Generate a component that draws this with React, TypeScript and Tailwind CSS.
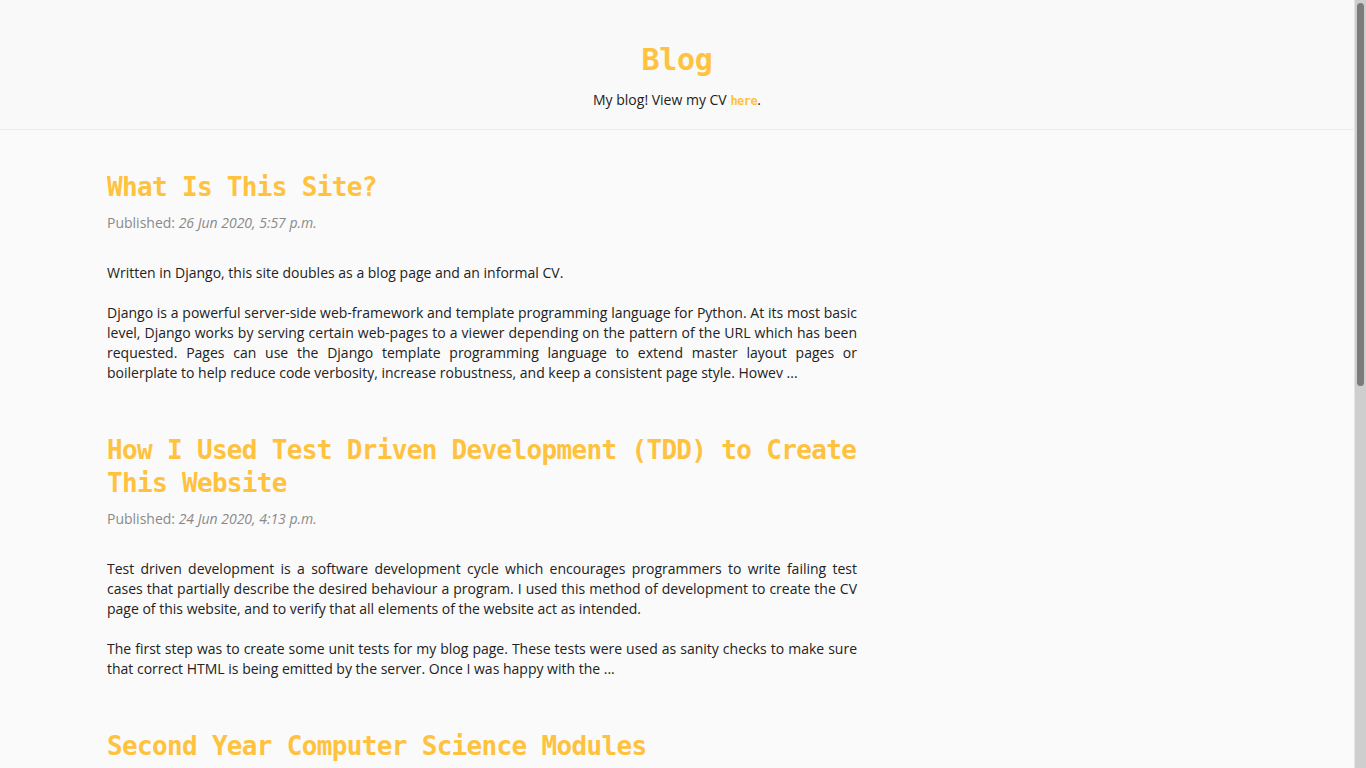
const posts = [
  {
    title: 'What Is This Site?',
    date: '26 Jun 2020, 5:57 p.m.',
    paragraphs: [
      'Written in Django, this site doubles as a blog page and an informal CV.',
      'Django is a powerful server-side web-framework and template programming language for Python. At its most basic level, Django works by serving certain web-pages to a viewer depending on the pattern of the URL which has been requested. Pages can use the Django template programming language to extend master layout pages or boilerplate to help reduce code verbosity, increase robustness, and keep a consistent page style. Howev ...',
    ],
  },
  {
    title: 'How I Used Test Driven Development (TDD) to Create This Website',
    date: '24 Jun 2020, 4:13 p.m.',
    paragraphs: [
      'Test driven development is a software development cycle which encourages programmers to write failing test cases that partially describe the desired behaviour a program. I used this method of development to create the CV page of this website, and to verify that all elements of the website act as intended.',
      'The first step was to create some unit tests for my blog page. These tests were used as sanity checks to make sure that correct HTML is being emitted by the server. Once I was happy with the ...',
    ],
  },
  {
    title: 'Second Year Computer Science Modules',
    date: '20 Jun 2020, 2:31 p.m.',
    paragraphs: [
      'My second year of studying Computer Science has now come to an end, so I thought it would be a good idea to write a short summary of each of the modules I took this year, and what I thought of them.',
      'The year was split into two terms, each containing a mix of compulsory and optional modules. Topics ranged from software engineering and databases through to algorithms, networks and the theory of computation, with a group project running throughout the year that tied many of these ideas together ...',
    ],
  },
]

export default function App() {
  return (
    <div className="flex h-screen overflow-hidden bg-[#fafafa] font-['Open_Sans',sans-serif] text-[14px] text-[#222]">
      <div className="flex-1 overflow-hidden">
        <header className="h-[130px] border-b border-[#ececec] bg-[#f9f9f9] pt-[40px] text-center">
          <h1 className="font-['DejaVu_Sans_Mono',monospace] text-[30px] leading-[40px] font-bold tracking-[-0.3px] text-[#ffc23e]">
            Blog
          </h1>
          <p className="mt-[10px] leading-[20px]">
            My blog! View my CV{' '}
            <a href="#" className="font-['DejaVu_Sans_Mono',monospace] text-[12px] font-bold tracking-[-0.5px] text-[#ffc23e]">
              here
            </a>
            .
          </p>
        </header>

        <main className="ml-[107px] w-[750px] pt-[41px] pb-[80px]">
          {posts.map((post) => (
            <article key={post.title} className="mb-[51px]">
              <h2 className="font-['DejaVu_Sans_Mono',monospace] text-[26px] leading-[33px] font-bold tracking-[-0.67px] text-[#ffc23e]">
                {post.title}
              </h2>
              <p className="mt-[9px] leading-[20px] text-[#8a8a8a]">
                Published: <em>{post.date}</em>
              </p>
              <div className="mt-[30px] flex flex-col gap-[20px]">
                {post.paragraphs.map((text, i) => (
                  <p key={i} className="text-justify leading-[20px]">
                    {text}
                  </p>
                ))}
              </div>
            </article>
          ))}
        </main>
      </div>

      {/* browser scrollbar */}
      <div className="w-[12px] shrink-0 border-l border-[#e4e4e4] bg-[#cecece] pt-[3px]">
        <div className="ml-[2px] h-[383px] w-[7px] rounded-full bg-[#7b7b7b]" />
      </div>
    </div>
  )
}
